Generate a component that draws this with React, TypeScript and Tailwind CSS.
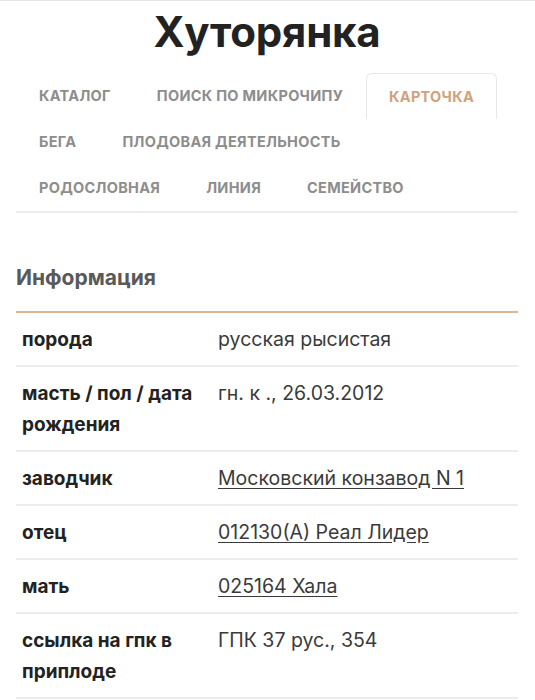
import React from 'react';

const tabRows: { label: string; active?: boolean }[][] = [
  [{ label: 'Каталог' }, { label: 'Поиск по микрочипу' }, { label: 'Карточка', active: true }],
  [{ label: 'Бега' }, { label: 'Плодовая деятельность' }],
  [{ label: 'Родословная' }, { label: 'Линия' }, { label: 'Семейство' }],
];

interface InfoRow {
  name: string;
  value: string;
  link?: boolean;
}

const rows: InfoRow[] = [
  { name: 'порода', value: 'русская рысистая' },
  { name: 'масть / пол / дата рождения', value: 'гн. к ., 26.03.2012' },
  { name: 'заводчик', value: 'Московский конзавод N 1', link: true },
  { name: 'отец', value: '012130(А) Реал Лидер', link: true },
  { name: 'мать', value: '025164 Хала', link: true },
  { name: 'ссылка на гпк в приплоде', value: 'ГПК 37 рус., 354' },
];

const App: React.FC = () => {
  return (
    <div className="min-h-screen bg-white border-t border-[#e6e6e6] font-['Inter','Noto_Sans',sans-serif]">
      <div className="px-4 pr-[17px]">
        <h1 className="pt-[6px] text-center text-[42px] font-bold leading-[50px] tracking-[-0.2px] text-[#222]">
          Хуторянка
        </h1>

        <div className="mt-[16px] border-b-2 border-[#ececec]">
          {tabRows.map((row, i) => (
            <div key={i} className="flex">
              {row.map((tab) => (
                <div
                  key={tab.label}
                  className={
                    tab.active
                      ? 'flex h-[46px] items-center rounded-t-md border border-b-0 border-[#e8e8e8] px-[22px] text-[14.5px] font-bold uppercase tracking-[0.3px] text-[#cfa27c]'
                      : 'flex h-[46px] items-center border border-transparent px-[22px] text-[14.5px] font-bold uppercase tracking-[0.3px] text-[#8d8d8d]'
                  }
                >
                  {tab.label}
                </div>
              ))}
            </div>
          ))}
        </div>

        <h2 className="mt-[51px] text-[21px] font-bold leading-[28px] text-[#595959]">Информация</h2>

        <table className="mt-[19px] w-full border-t-2 border-[#dcb796] text-[19px] leading-[31px]">
          <tbody>
            {rows.map((r) => (
              <tr key={r.name} className="border-b-2 border-[#ececec]">
                <td className="w-[196px] px-[6px] py-[10.5px] align-top font-bold text-[#222]">{r.name}</td>
                <td className="px-[6px] py-[10.5px] align-top text-[19.5px] text-[#3a3a3a]">
                  {r.link ? <a className="underline underline-offset-[3px]">{r.value}</a> : r.value}
                </td>
              </tr>
            ))}
          </tbody>
        </table>
      </div>
    </div>
  );
};

export default App;
